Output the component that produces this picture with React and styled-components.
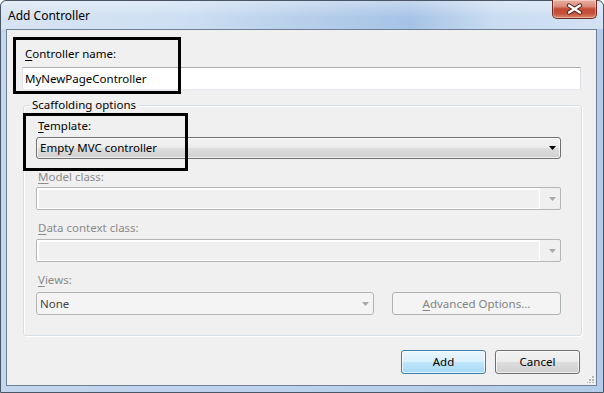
import React from "react";
import styled, { createGlobalStyle, css } from "styled-components";

const Global = createGlobalStyle`
  html, body { margin: 0; padding: 0; background: #fff; }
  body { font-family: "Noto Sans", "Open Sans", sans-serif; font-size: 11.5px; color: #000; }
  #root { width: 604px; height: 393px; overflow: hidden; }
`;

const Window = styled.div`
  position: relative;
  box-sizing: border-box;
  width: 604px;
  height: 393px;
  border: 1px solid #4a5565;
  border-radius: 6px 6px 0 0;
  background: linear-gradient(to right, #c3d6ee 0%, #bcd1eb 50%, #b4cce9 100%);
  display: flex;
  flex-direction: column;
  padding: 0 6px 6px 5px;
`;

const TitleBar = styled.div`
  height: 28px;
  margin: 0 -6px 0 -5px;
  padding: 0 6px 0 7px;
  display: flex;
  justify-content: space-between;
  align-items: flex-start;
  background:
    linear-gradient(to bottom, rgba(255,255,255,0.35), rgba(255,255,255,0) 60%),
    linear-gradient(to right, #d7e4f3 0%, #cddff2 30%, #b2cbe9 55%, #a6c3e6 68%, #c9dcf1 82%, #d3e2f3 100%);
  border-radius: 6px 6px 0 0;
`;

const Title = styled.span`
  font-size: 12px;
  line-height: 29px;
  color: #000;
`;

const CloseButton = styled.div`
  box-sizing: border-box;
  width: 45px;
  height: 19px;
  margin-top: -1px;
  border: 1px solid #6b2b22;
  border-top: none;
  border-radius: 0 0 5px 5px;
  background: linear-gradient(to bottom, #eab0a3 0%, #dc8c7c 35%, #c14a35 50%, #c7513b 75%, #dd8a6e 100%);
  box-shadow: inset 0 0 0 1px rgba(255,255,255,0.35);
  display: flex;
  align-items: center;
  justify-content: center;
`;

const Client = styled.div`
  position: relative;
  flex: 1;
  box-sizing: border-box;
  border: 1px solid #6e8096;
  background: #f0f0f0;
  padding: 16px 15px 0 15px;
  display: flex;
  flex-direction: column;
`;

const FieldLabel = styled.div`
  height: 16px;
  line-height: 16px;
  margin-left: ${(p) => p.$indent || 0}px;
  margin-bottom: ${(p) => p.$gap ?? 3}px;
  color: ${(p) => (p.$disabled ? "#8a8a8a" : "#000")};
  white-space: nowrap;
`;

const Key = styled.span`
  text-decoration: underline;
  text-underline-offset: 2px;
`;

const TextInput = styled.div`
  box-sizing: border-box;
  height: 23px;
  border: 1px solid #abadb3;
  border-left-color: #e2e3ea;
  border-right-color: #dbdfe6;
  border-bottom-color: #e3e9ef;
  background: #fff;
  padding: 0 2px;
  line-height: 21px;
`;

const GroupBox = styled.div`
  position: relative;
  margin: 15px -1px 0 1px;
  border: 1px solid #d5dfe5;
  border-radius: 3px;
  box-shadow: inset 1px 1px 0 #fff, 1px 1px 0 #fff;
  padding: 12px 20px 20px 12px;
  display: flex;
  flex-direction: column;
`;

const Legend = styled.span`
  position: absolute;
  top: -9px;
  left: 6px;
  padding: 0 2px;
  background: #f0f0f0;
  line-height: 16px;
  color: #000;
`;

const comboVariants = {
  enabled: css`
    border: 1px solid #707070;
    border-radius: 3px;
    background: linear-gradient(to bottom, #f2f2f2 0%, #ebebeb 48%, #dddddd 52%, #cfcfcf 100%);
    color: #000;
    box-shadow: inset 0 0 0 1px rgba(255,255,255,0.7);
  `,
  edit: css`
    border: 1px solid #b5b5b5;
    border-radius: 2px;
    background: #f0f0f0;
    color: #6d6d6d;
  `,
  list: css`
    border: 1px solid #b4b4b4;
    border-radius: 3px;
    background: #f4f4f4;
    color: #444;
  `,
};

const Combo = styled.div`
  box-sizing: border-box;
  position: relative;
  height: ${(p) => p.$h || 23}px;
  width: ${(p) => (p.$w ? `${p.$w}px` : "auto")};
  margin-bottom: ${(p) => p.$mb ?? 0}px;
  display: flex;
  align-items: center;
  padding: 0 4px 0 3px;
  ${(p) => comboVariants[p.$variant]}
`;

const ComboText = styled.span`
  flex: 1;
  white-space: nowrap;
  line-height: 20px;
`;

const EditArea = styled.div`
  flex: 1;
  align-self: stretch;
  margin: 0 0 0 -3px;
  border: 2px solid #fff;
  border-right-width: 1px;
  border-bottom-width: 1px;
  background: #f0f0f0;
`;

const ArrowBox = styled.div`
  width: ${(p) => p.$w || 11}px;
  display: flex;
  justify-content: flex-end;
  align-items: center;
`;

const Row = styled.div`
  display: flex;
  align-items: flex-start;
  justify-content: space-between;
`;

const buttonKinds = {
  primary: css`
    border: 1px solid #3c7fb1;
    background: linear-gradient(to bottom, #eaf6fd 0%, #d9f0fc 48%, #bee6fd 52%, #a7d9f5 100%);
    color: #000;
    box-shadow: inset 0 0 0 1px rgba(255,255,255,0.7);
  `,
  normal: css`
    border: 1px solid #707070;
    background: linear-gradient(to bottom, #f2f2f2 0%, #ebebeb 48%, #dddddd 52%, #cfcfcf 100%);
    color: #000;
    box-shadow: inset 0 0 0 1px rgba(255,255,255,0.7);
  `,
  disabled: css`
    border: 1px solid #adb2b5;
    background: #f4f4f4;
    color: #838383;
  `,
};

const PushButton = styled.div`
  box-sizing: border-box;
  width: ${(p) => p.$w || 85}px;
  height: ${(p) => p.$h || 24}px;
  border-radius: 3px;
  display: flex;
  align-items: center;
  justify-content: center;
  line-height: 20px;
  white-space: nowrap;
  ${(p) => buttonKinds[p.$kind || "normal"]}
`;

const ButtonRow = styled.div`
  display: flex;
  justify-content: flex-end;
  gap: 9px;
  margin: 14px 1px 0 0;
`;

const Grip = styled.svg`
  position: absolute;
  right: 2px;
  bottom: 2px;
`;

const Highlight = styled.div`
  position: absolute;
  box-sizing: border-box;
  left: ${(p) => p.$x}px;
  top: ${(p) => p.$y}px;
  width: ${(p) => p.$w}px;
  height: ${(p) => p.$h}px;
  border: 3px solid #000;
  pointer-events: none;
`;

const Arrow = ({ color = "#000" }) => (
  <svg width="7" height="4" viewBox="0 0 7 4">
    <path d="M0 0H7L3.5 4Z" fill={color} />
  </svg>
);

export default function App() {
  return (
    <>
      <Global />
      <Window>
        <TitleBar>
          <Title>Add Controller</Title>
          <CloseButton>
            <svg width="17" height="12" viewBox="0 0 17 12">
              <path d="M3 2.5L14 9.5M14 2.5L3 9.5" stroke="#4a1f18" strokeWidth="4.2" strokeLinecap="round" />
              <path d="M3 2.5L14 9.5M14 2.5L3 9.5" stroke="#fff" strokeWidth="2.4" strokeLinecap="round" />
            </svg>
          </CloseButton>
        </TitleBar>
        <Client>
          <FieldLabel $indent={3} $gap={5}>
            <Key>C</Key>ontroller name:
          </FieldLabel>
          <TextInput>MyNewPageController</TextInput>
          <GroupBox>
            <Legend>Scaffolding options</Legend>
            <FieldLabel $indent={2} $gap={3}>
              <Key>T</Key>emplate:
            </FieldLabel>
            <Combo $variant="enabled" $h={22} $mb={10}>
              <ComboText>Empty MVC controller</ComboText>
              <ArrowBox><Arrow /></ArrowBox>
            </Combo>
            <FieldLabel $indent={2} $gap={2} $disabled>
              <Key>M</Key>odel class:
            </FieldLabel>
            <Combo $variant="edit" $mb={10}>
              <EditArea />
              <ArrowBox $w={16}><Arrow color="#a8a8a8" /></ArrowBox>
            </Combo>
            <FieldLabel $indent={2} $gap={3} $disabled>
              <Key>D</Key>ata context class:
            </FieldLabel>
            <Combo $variant="edit" $mb={10}>
              <EditArea />
              <ArrowBox $w={16}><Arrow color="#a8a8a8" /></ArrowBox>
            </Combo>
            <FieldLabel $indent={2} $gap={4} $disabled>
              <Key>V</Key>iews:
            </FieldLabel>
            <Row>
              <Combo $variant="list" $w={338}>
                <ComboText>None</ComboText>
                <ArrowBox><Arrow color="#a8a8a8" /></ArrowBox>
              </Combo>
              <PushButton $kind="disabled" $w={169} $h={23}>
                <span><Key>A</Key>dvanced Options...</span>
              </PushButton>
            </Row>
          </GroupBox>
          <ButtonRow>
            <PushButton $kind="primary">Add</PushButton>
            <PushButton>Cancel</PushButton>
          </ButtonRow>
          <Grip width="7" height="7" viewBox="0 0 7 7">
            <g fill="#b7bcc3">
              <rect x="5" y="0" width="2" height="2" />
              <rect x="2" y="3" width="2" height="2" />
              <rect x="5" y="3" width="2" height="2" />
              <rect x="-1" y="6" width="2" height="2" />
              <rect x="2" y="6" width="2" height="2" />
              <rect x="5" y="6" width="2" height="2" />
            </g>
          </Grip>
        </Client>
        <Highlight $x={12} $y={36} $w={168} $h={57} />
        <Highlight $x={22} $y={112} $w={165} $h={58} />
      </Window>
    </>
  );
}
